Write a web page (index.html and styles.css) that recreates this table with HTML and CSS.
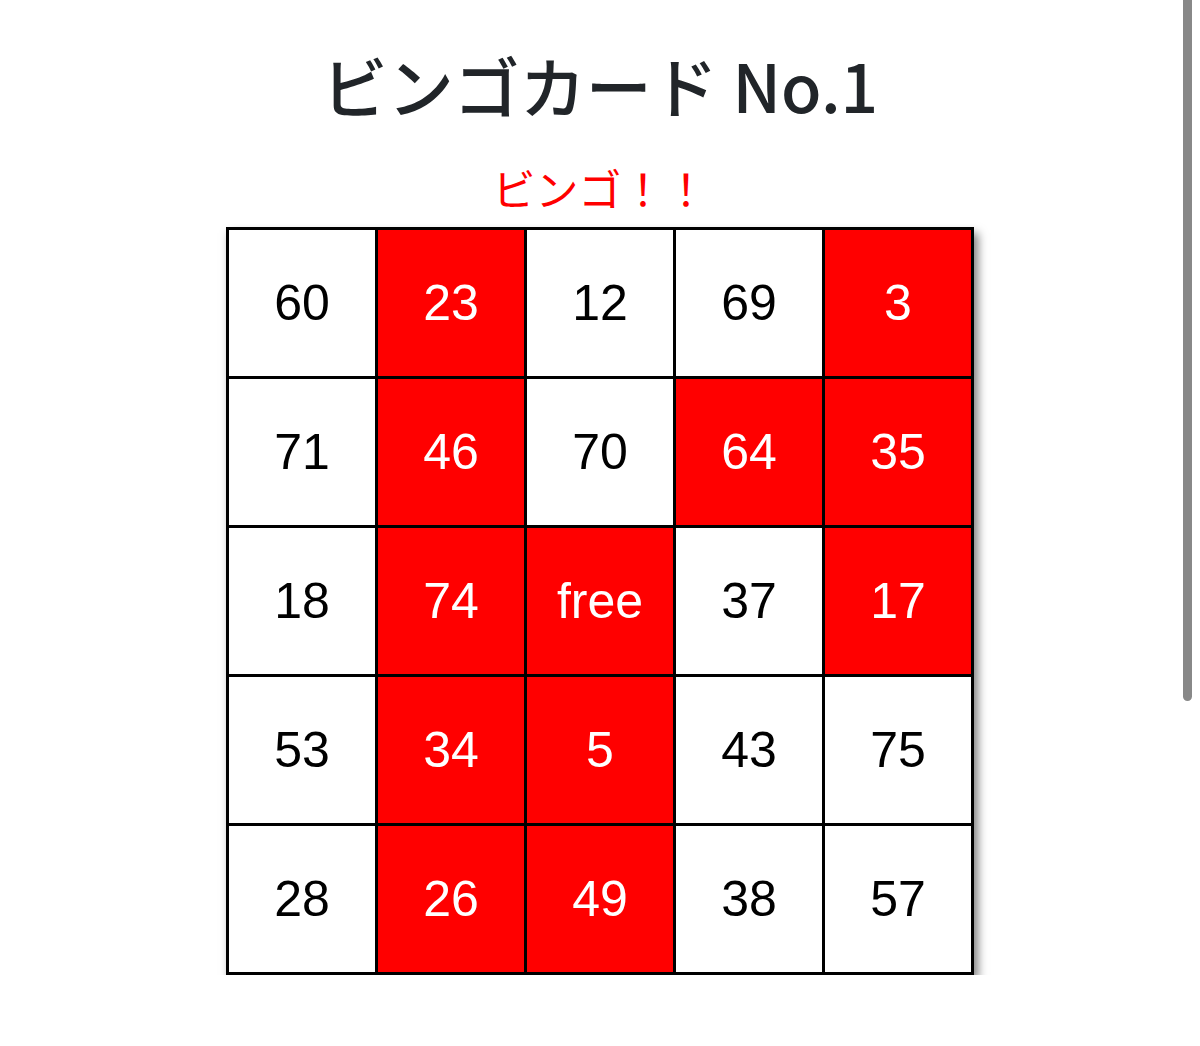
FILE: index.html
```html
<!DOCTYPE html>
<html lang="ja">
<head>
<meta charset="utf-8">
<title>ビンゴカード</title>
<link rel="stylesheet" href="styles.css">
</head>
<body>
<div class="scrollbar"></div>
<main class="page">
  <h1 class="title">ビンゴカード No.1</h1>
  <p class="bingo">ビンゴ！！</p>
  <table class="card">
    <tr><td>60</td><td class="hit">23</td><td>12</td><td>69</td><td class="hit">3</td></tr>
    <tr><td>71</td><td class="hit">46</td><td>70</td><td class="hit">64</td><td class="hit">35</td></tr>
    <tr><td>18</td><td class="hit">74</td><td class="hit">free</td><td>37</td><td class="hit">17</td></tr>
    <tr><td>53</td><td class="hit">34</td><td class="hit">5</td><td>43</td><td>75</td></tr>
    <tr><td>28</td><td class="hit">26</td><td class="hit">49</td><td>38</td><td>57</td></tr>
  </table>
</main>
</body>
</html>
```
FILE: styles.css
```css
html, body {
  margin: 0;
  padding: 0;
  background: #fff;
}
body {
  font-family: "Liberation Sans", "Noto Sans CJK JP", sans-serif;
  color: #000;
}
.page {
  display: flex;
  flex-direction: column;
  align-items: center;
  padding-top: 42px;
}
.title {
  margin: 0;
  font-family: "Noto Sans CJK JP", sans-serif;
  font-weight: 500;
  font-size: 66px;
  line-height: 84px;
  color: #212529;
}
.bingo {
  margin: 36px 0 0;
  font-family: "Noto Sans CJK JP", sans-serif;
  font-size: 43px;
  line-height: 50px;
  color: #f00;
}
.card {
  margin-top: 15px;
  border-collapse: collapse;
  border: 3px solid #000;
  box-shadow: 4px 6px 9px rgba(0, 0, 0, 0.5);
}
.card td {
  width: 146px;
  height: 146px;
  padding: 0;
  border: 3px solid #000;
  text-align: center;
  vertical-align: middle;
  font-size: 50px;
  background: #fff;
  color: #000;
}
.card td.hit {
  background: #f00;
  color: #fff;
}
.scrollbar {
  position: fixed;
  top: 0;
  left: 1183px;
  width: 9px;
  height: 701px;
  background: #888;
  border-radius: 0 0 5px 5px;
}
```
